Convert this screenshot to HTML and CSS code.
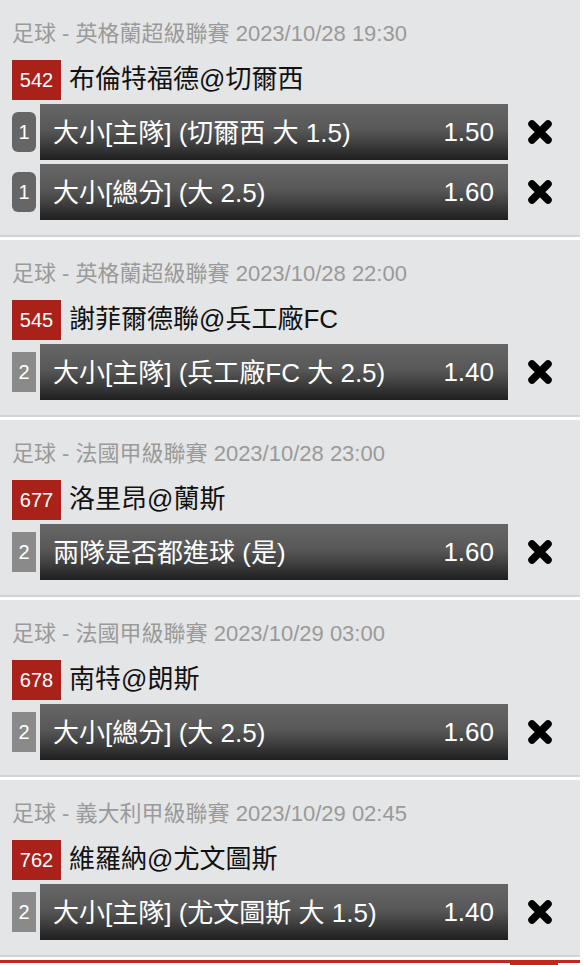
FILE: index.html
```html
<!DOCTYPE html>
<html lang="zh-Hant">
<head>
<meta charset="utf-8">
<title>投注單</title>
<link rel="stylesheet" href="styles.css">
</head>
<body>
<div class="slip">
  <section class="match">
    <div class="league">足球 - 英格蘭超級聯賽 2023/10/28 19:30</div>
    <div class="teams"><span class="code">542</span><span class="name">布倫特福德@切爾西</span></div>
    <div class="bet">
      <span class="num round">1</span>
      <div class="bar"><span class="sel">大小[主隊] (切爾西 大 1.5)</span><span class="odds">1.50</span></div>
      <span class="remove"><svg viewBox="0 0 26 26" width="26" height="26"><path d="M5 5 L21 21 M21 5 L5 21" stroke="#000" stroke-width="7.5" stroke-linecap="round"/></svg></span>
    </div>
    <div class="bet">
      <span class="num round">1</span>
      <div class="bar"><span class="sel">大小[總分] (大 2.5)</span><span class="odds">1.60</span></div>
      <span class="remove"><svg viewBox="0 0 26 26" width="26" height="26"><path d="M5 5 L21 21 M21 5 L5 21" stroke="#000" stroke-width="7.5" stroke-linecap="round"/></svg></span>
    </div>
  </section>
  <section class="match">
    <div class="league">足球 - 英格蘭超級聯賽 2023/10/28 22:00</div>
    <div class="teams"><span class="code">545</span><span class="name">謝菲爾德聯@兵工廠FC</span></div>
    <div class="bet">
      <span class="num">2</span>
      <div class="bar"><span class="sel">大小[主隊] (兵工廠FC 大 2.5)</span><span class="odds">1.40</span></div>
      <span class="remove"><svg viewBox="0 0 26 26" width="26" height="26"><path d="M5 5 L21 21 M21 5 L5 21" stroke="#000" stroke-width="7.5" stroke-linecap="round"/></svg></span>
    </div>
  </section>
  <section class="match">
    <div class="league">足球 - 法國甲級聯賽 2023/10/28 23:00</div>
    <div class="teams"><span class="code">677</span><span class="name">洛里昂@蘭斯</span></div>
    <div class="bet">
      <span class="num">2</span>
      <div class="bar"><span class="sel">兩隊是否都進球 (是)</span><span class="odds">1.60</span></div>
      <span class="remove"><svg viewBox="0 0 26 26" width="26" height="26"><path d="M5 5 L21 21 M21 5 L5 21" stroke="#000" stroke-width="7.5" stroke-linecap="round"/></svg></span>
    </div>
  </section>
  <section class="match">
    <div class="league">足球 - 法國甲級聯賽 2023/10/29 03:00</div>
    <div class="teams"><span class="code">678</span><span class="name">南特@朗斯</span></div>
    <div class="bet">
      <span class="num">2</span>
      <div class="bar"><span class="sel">大小[總分] (大 2.5)</span><span class="odds">1.60</span></div>
      <span class="remove"><svg viewBox="0 0 26 26" width="26" height="26"><path d="M5 5 L21 21 M21 5 L5 21" stroke="#000" stroke-width="7.5" stroke-linecap="round"/></svg></span>
    </div>
  </section>
  <section class="match">
    <div class="league">足球 - 義大利甲級聯賽 2023/10/29 02:45</div>
    <div class="teams"><span class="code">762</span><span class="name">維羅納@尤文圖斯</span></div>
    <div class="bet">
      <span class="num">2</span>
      <div class="bar"><span class="sel">大小[主隊] (尤文圖斯 大 1.5)</span><span class="odds">1.40</span></div>
      <span class="remove"><svg viewBox="0 0 26 26" width="26" height="26"><path d="M5 5 L21 21 M21 5 L5 21" stroke="#000" stroke-width="7.5" stroke-linecap="round"/></svg></span>
    </div>
  </section>
  <div class="footer"><span class="footer-btn"></span></div>
</div>
</body>
</html>
```

FILE: styles.css
```css
html, body {
  margin: 0;
  padding: 0;
  background: #ffffff;
}
body {
  font-family: "Liberation Sans", "Noto Sans CJK TC", sans-serif;
}
.slip {
  width: 580px;
}
.match {
  background: #e4e5e7;
  padding: 20px 0 15px 12px;
  border-bottom: 2px solid #d2d3d5;
  margin-bottom: 3px;
  display: flex;
  flex-direction: column;
  gap: 4px;
}
.league {
  height: 28px;
  line-height: 28px;
  font-size: 22px;
  color: #9a9a9a;
  margin-bottom: 8px;
  white-space: nowrap;
}
.teams {
  display: flex;
  align-items: center;
  height: 40px;
}
.code {
  width: 49px;
  height: 40px;
  background: #a8221a;
  color: #fff;
  font-size: 20px;
  line-height: 40px;
  text-align: center;
}
.name {
  margin-left: 8px;
  margin-bottom: 8px;
  font-size: 26px;
  color: #111;
  white-space: nowrap;
}
.bet {
  display: flex;
  align-items: center;
  height: 56px;
}
.num {
  width: 24px;
  height: 40px;
  background: #8a8a8a;
  color: #fff;
  font-size: 20px;
  line-height: 40px;
  text-align: center;
  margin-right: 4px;
}
.num.round {
  background: #666666;
  border-radius: 6px;
}
.bar {
  width: 468px;
  height: 56px;
  box-sizing: border-box;
  padding: 0 14px 0 13px;
  display: flex;
  align-items: center;
  justify-content: space-between;
  background: linear-gradient(to bottom, #666666 0%, #585858 45%, #3a3a3a 75%, #1f1f1f 100%);
  color: #fff;
  font-size: 26px;
  white-space: nowrap;
}
.sel {
  margin-bottom: 3px;
}
.odds {
  font-size: 26px;
}
.remove {
  margin-left: 19px;
  width: 26px;
  height: 26px;
  display: flex;
}
.footer {
  border-top: 3px solid #c1281d;
  height: 6px;
  display: flex;
  justify-content: flex-end;
  padding-right: 22px;
}
.footer-btn {
  width: 48px;
  height: 6px;
  background: #c1281d;
}
```
